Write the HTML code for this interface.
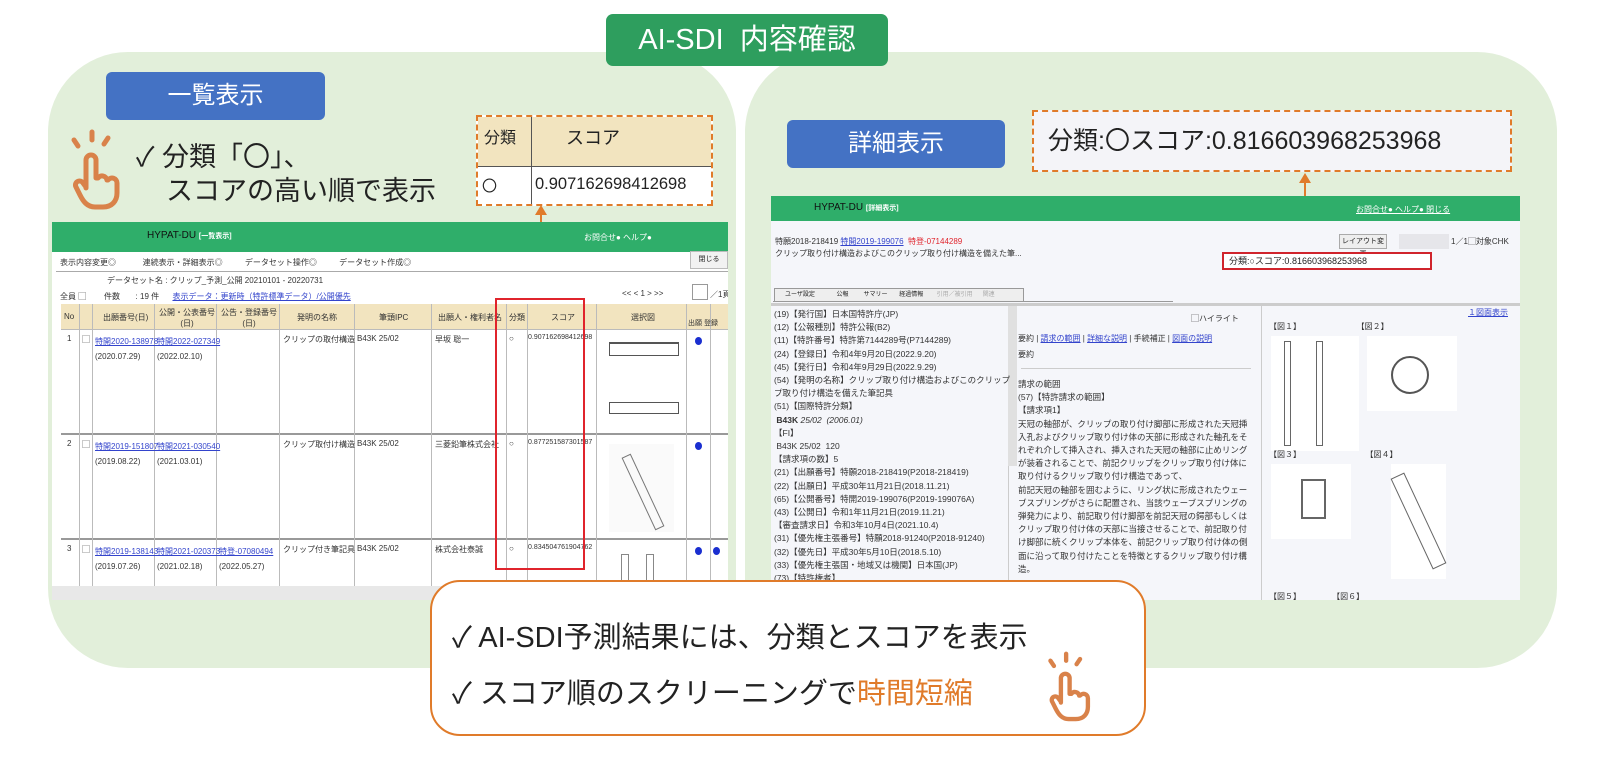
<!DOCTYPE html>
<html><head><meta charset="utf-8">
<style>
*{margin:0;padding:0;box-sizing:border-box}
body{width:1600px;height:774px;background:#fff;position:relative;overflow:hidden;font-family:"Liberation Sans","Noto Sans CJK JP",sans-serif;color:#222}
.a{position:absolute}
.panel{background:#e2efda;border-radius:80px}
.btn{background:#4472c4;color:#fff;border-radius:6px;font-size:24px;text-align:center}
.dash{border:2px dashed #e07b2a}
.s{font-size:8px;white-space:nowrap;color:#333}
.l{color:#3344cc;text-decoration:underline}
.gh{background:#2fae6a}
.vl{position:absolute;top:0;bottom:0;width:1px;background:#bbb}
.hl{position:absolute;left:0;right:0;height:1px;background:#bbb}
.t{font-size:8.5px;line-height:19.5px;white-space:nowrap;color:#333}
.dot{position:absolute;width:7px;height:8px;border-radius:50%;background:#1a2fd0;border-bottom:2px solid #1a2fd0}
</style></head><body>

<div class="a panel" style="left:48px;top:52px;width:688px;height:616px"></div>
<div class="a panel" style="left:745px;top:52px;width:812px;height:616px"></div>

<div class="a" style="left:606px;top:14px;width:282px;height:52px;background:#2e9e5e;border-radius:7px;color:#fff;font-size:29px;text-align:center;line-height:52px">AI-SDI&nbsp; 内容確認</div>

<!-- left header -->
<div class="a btn" style="left:106px;top:72px;width:219px;height:48px;line-height:48px">一覧表示</div>
<svg class="a" style="left:62px;top:128px" width="62" height="82" viewBox="0 0 62 82" fill="none" stroke="#d9824a" stroke-width="5" stroke-linecap="round" stroke-linejoin="round">
<path d="M30 4v8M12 12l4 6M46 10l-4 6"/>
<path d="M24 60V32a5 5 0 0 1 10 0v18h2a5 5 0 0 1 9 2h1a5 5 0 0 1 9 3v10c0 8-5 14-14 14h-8c-8 0-12-6-15-12l-4-8a4 4 0 0 1 7-4l3 4"/>
</svg>
<div class="a" style="left:136px;top:140px;font-size:27px;line-height:34px;white-space:nowrap">✓ 分類「〇」、<br>&nbsp;&nbsp;&nbsp;&nbsp;スコアの高い順で表示</div>

<div class="a dash" style="left:476px;top:115px;width:237px;height:91px;background:#fff">
 <div class="a" style="left:0;top:0;width:233px;height:50px;background:#f2e4bf;border-bottom:1px solid #555"></div>
 <div class="a" style="left:53px;top:0;width:1px;height:87px;background:#555"></div>
 <div class="a" style="left:6px;top:7px;font-size:16px">分類</div>
 <div class="a" style="left:88px;top:7px;font-size:18px">スコア</div>
 <div class="a" style="left:4px;top:58px;font-size:15px">〇</div>
 <div class="a" style="left:57px;top:58px;font-size:16.5px">0.907162698412698</div>
</div>
<div class="a" style="left:540px;top:210px;width:2px;height:88px;background:#e07b2a"></div>
<div class="a" style="left:535px;top:205px;width:0;height:0;border-left:6px solid transparent;border-right:6px solid transparent;border-bottom:10px solid #e07b2a"></div>

<!-- left screenshot -->
<div class="a" style="left:52px;top:222px;width:676px;height:378px;background:#fff;overflow:hidden">
 <div class="a gh" style="left:0;top:0;width:676px;height:30px"></div>
 <div class="a" style="left:95px;top:8px;font-size:10px;color:#111">HYPAT-DU <span style="font-size:7px;color:#fff;font-weight:bold">[一覧表示]</span></div>
 <div class="a s" style="left:532px;top:10px;color:#fff">お問合せ● ヘルプ●</div>
 <div class="a s" style="left:8px;top:35px">表示内容変更◎ &nbsp;&nbsp;&nbsp;&nbsp;&nbsp;&nbsp;&nbsp;&nbsp;&nbsp;&nbsp;&nbsp;連続表示・詳細表示◎ &nbsp;&nbsp;&nbsp;&nbsp;&nbsp;&nbsp;&nbsp;&nbsp;&nbsp;データセット操作◎ &nbsp;&nbsp;&nbsp;&nbsp;&nbsp;&nbsp;&nbsp;&nbsp;&nbsp;データセット作成◎</div>
 <div class="a" style="left:638px;top:29px;width:38px;height:18px;border:1px solid #bbb;background:#f2f2f2;font-size:7px;text-align:center;line-height:16px">閉じる</div>
 <div class="a" style="left:4px;top:49px;width:672px;height:1px;background:#aaa"></div>
 <div class="a s" style="left:55px;top:53px">データセット名 : クリップ_予測_公開 20210101 - 20220731</div>
 <div class="a s" style="left:8px;top:69px">全員 ▢ &nbsp;&nbsp;&nbsp;&nbsp;&nbsp;&nbsp;&nbsp;件数 &nbsp;&nbsp;&nbsp;&nbsp;&nbsp;&nbsp;: 19 件 &nbsp;&nbsp;&nbsp;&nbsp;&nbsp;<span class="l">表示データ：更新時（特許標準データ）/公開優先</span></div>
 <div class="a s" style="left:570px;top:67px">&lt;&lt; &lt; 1 &gt; &gt;&gt;</div>
 <div class="a" style="left:640px;top:62px;width:16px;height:16px;border:1px solid #999"></div>
 <div class="a s" style="left:658px;top:67px">／1頁</div>
 <div class="a" style="left:9px;top:82px;width:667px;height:296px">
  <div class="a" style="left:0;top:0;width:100%;height:25px;background:#f2e4bf"></div>
  <div class="hl" style="top:25px"></div><div class="hl" style="top:129px;background:#999;height:2px"></div><div class="hl" style="top:234px;background:#999;height:2px"></div>
  <div class="vl" style="left:18px"></div><div class="vl" style="left:31px"></div><div class="vl" style="left:93px"></div><div class="vl" style="left:155px"></div><div class="vl" style="left:218px"></div><div class="vl" style="left:293px"></div><div class="vl" style="left:370px"></div><div class="vl" style="left:445px"></div><div class="vl" style="left:466px"></div><div class="vl" style="left:535px"></div><div class="vl" style="left:625px"></div><div class="vl" style="left:649px"></div>
  <div class="a s" style="left:3px;top:8px">No</div><div class="a s" style="left:42px;top:8px">出願番号(日)</div><div class="a s" style="left:98px;top:3px;text-align:center">公開・公表番号<br>(日)</div><div class="a s" style="left:160px;top:3px;text-align:center">公告・登録番号<br>(日)</div><div class="a s" style="left:236px;top:8px">発明の名称</div><div class="a s" style="left:318px;top:8px">筆頭IPC</div><div class="a s" style="left:377px;top:8px">出願人・権利者名</div><div class="a s" style="left:448px;top:8px">分類</div><div class="a s" style="left:490px;top:8px">スコア</div><div class="a s" style="left:570px;top:8px">選択図</div><div class="a s" style="left:627px;top:14px;font-size:7px">出願 登録</div>
  <div class="a s" style="left:6px;top:30px">1</div><div class="a s" style="left:21px;top:30px">▢</div><div class="a s" style="left:34px;top:30px;line-height:15px"><span class="l">特開2020-138978</span><br>(2020.07.29)</div><div class="a s" style="left:96px;top:30px;line-height:15px"><span class="l">特開2022-027349</span><br>(2022.02.10)</div><div class="a s" style="left:222px;top:30px">クリップの取付構造</div><div class="a s" style="left:296px;top:30px">B43K 25/02</div><div class="a s" style="left:374px;top:30px">早坂 聡一</div><div class="a s" style="left:448px;top:30px">○</div><div class="a s" style="left:467px;top:30px;font-size:7px">0.907162698412698</div>
  <div class="a s" style="left:6px;top:135px">2</div><div class="a s" style="left:21px;top:135px">▢</div><div class="a s" style="left:34px;top:135px;line-height:15px"><span class="l">特開2019-151807</span><br>(2019.08.22)</div><div class="a s" style="left:96px;top:135px;line-height:15px"><span class="l">特開2021-030540</span><br>(2021.03.01)</div><div class="a s" style="left:222px;top:135px">クリップ取付け構造</div><div class="a s" style="left:296px;top:135px">B43K 25/02</div><div class="a s" style="left:374px;top:135px">三菱鉛筆株式会社</div><div class="a s" style="left:448px;top:135px">○</div><div class="a s" style="left:467px;top:135px;font-size:7px">0.877251587301587</div>
  <div class="a s" style="left:6px;top:240px">3</div><div class="a s" style="left:21px;top:240px">▢</div><div class="a s" style="left:34px;top:240px;line-height:15px"><span class="l">特開2019-138143</span><br>(2019.07.26)</div><div class="a s" style="left:96px;top:240px;line-height:15px"><span class="l">特開2021-020373</span><br>(2021.02.18)</div><div class="a s" style="left:158px;top:240px;line-height:15px"><span class="l">特登-07080494</span><br>(2022.05.27)</div><div class="a s" style="left:222px;top:240px">クリップ付き筆記具</div><div class="a s" style="left:296px;top:240px">B43K 25/02</div><div class="a s" style="left:374px;top:240px">株式会社泰誠</div><div class="a s" style="left:448px;top:240px">○</div><div class="a s" style="left:467px;top:240px;font-size:7px">0.834504761904762</div>
  <div class="dot" style="left:634px;top:33px"></div><div class="dot" style="left:634px;top:138px"></div><div class="dot" style="left:634px;top:243px"></div><div class="dot" style="left:652px;top:243px"></div>
  <div class="a" style="left:548px;top:38px;width:70px;height:14px;border:1px solid #555;border-top-width:2px"></div>
  <div class="a" style="left:548px;top:98px;width:70px;height:12px;border:1px solid #555"></div>
  <div class="a" style="left:548px;top:140px;width:65px;height:88px;background:#fafafa"></div>
  <div class="a" style="left:577px;top:148px;width:10px;height:80px;border:1px solid #777;transform:rotate(-25deg)"></div>
  <div class="a" style="left:560px;top:250px;width:8px;height:45px;border:1px solid #888"></div>
  <div class="a" style="left:585px;top:250px;width:8px;height:45px;border:1px solid #888"></div>
 </div>
 <div class="a" style="left:0;top:364px;width:676px;height:14px;background:#e8e8e8"></div>
 <div class="a" style="left:443px;top:76px;width:90px;height:272px;border:2px solid #e0242c"></div>
</div>

<!-- right header -->
<div class="a btn" style="left:787px;top:120px;width:218px;height:48px;line-height:48px">詳細表示</div>
<div class="a dash" style="left:1032px;top:110px;width:480px;height:62px;background:#f4f4f8;font-size:25px;line-height:58px;padding-left:14px;white-space:nowrap">分類:〇スコア:0.816603968253968</div>
<div class="a" style="left:1304px;top:178px;width:2px;height:72px;background:#e07b2a"></div>
<div class="a" style="left:1299px;top:173px;width:0;height:0;border-left:6px solid transparent;border-right:6px solid transparent;border-bottom:10px solid #e07b2a"></div>

<!-- right screenshot -->
<div class="a" style="left:771px;top:196px;width:749px;height:404px;background:#f5f6fa;overflow:hidden">
 <div class="a gh" style="left:0;top:0;width:749px;height:25px"></div>
 <div class="a" style="left:43px;top:6px;font-size:10px;color:#111">HYPAT-DU <span style="font-size:7px;color:#fff;font-weight:bold">[詳細表示]</span></div>
 <div class="a s" style="left:585px;top:8px;color:#fff;text-decoration:underline">お問合せ● ヘルプ● 閉じる</div>
 <div class="a s" style="left:4px;top:40px">特願2018-218419 <span class="l">特開2019-199076</span> &nbsp;<span style="color:#e0242c">特登-07144289</span></div>
 <div class="a s" style="left:4px;top:52px">クリップ取り付け構造およびこのクリップ取り付け構造を備えた筆...</div>
 <div class="a" style="left:568px;top:38px;width:48px;height:15px;border:1px solid #aaa;background:#eee;font-size:7px;text-align:center;line-height:13px">レイアウト変更</div>
 <div class="a" style="left:628px;top:38px;width:50px;height:15px;background:#e6e6ea"></div>
 <div class="a s" style="left:680px;top:40px">1／1▢対象CHK</div>
 <div class="a" style="left:451px;top:56px;width:210px;height:18px;border:2px solid #d0242c;background:#fff;font-size:9px;line-height:14px;padding-left:5px;white-space:nowrap">分類:○スコア:0.816603968253968</div>
 <div class="a" style="left:2px;top:105px;width:400px;height:1px;background:#999"></div>
 <div class="a" style="left:3px;top:92px;width:250px;height:14px;border:1px solid #999;background:#eee;font-size:6px;line-height:12px;padding-left:10px;white-space:nowrap">ユーザ設定 &nbsp;&nbsp;&nbsp;&nbsp;&nbsp;&nbsp;&nbsp;&nbsp;&nbsp;&nbsp;&nbsp;&nbsp;公報 &nbsp;&nbsp;&nbsp;&nbsp;&nbsp;&nbsp;&nbsp;&nbsp;サマリー &nbsp;&nbsp;&nbsp;&nbsp;&nbsp;&nbsp;経過情報 &nbsp;&nbsp;&nbsp;&nbsp;&nbsp;&nbsp;&nbsp;<span style="color:#aaa">引用／被引用 &nbsp;&nbsp;&nbsp;&nbsp;&nbsp;関連</span></div>
 <div class="a" style="left:0;top:107px;width:749px;height:3px;background:#ccc"></div>
 <div class="a" style="left:237px;top:110px;width:1px;height:300px;background:#ccc"></div>
 <div class="a" style="left:490px;top:110px;width:1px;height:300px;background:#ccc"></div>
 <div class="a" style="left:237px;top:110px;width:9px;height:160px;background:#e0e0e0"></div>
 <div class="a t" style="left:3px;top:112px;line-height:13.2px">(19)【発行国】日本国特許庁(JP)<br>(12)【公報種別】特許公報(B2)<br>(11)【特許番号】特許第7144289号(P7144289)<br>(24)【登録日】令和4年9月20日(2022.9.20)<br>(45)【発行日】令和4年9月29日(2022.9.29)<br>(54)【発明の名称】クリップ取り付け構造およびこのクリップ<br>プ取り付け構造を備えた筆記具<br>(51)【国際特許分類】<br>&nbsp;<b>B43K</b> <i>25/02 &nbsp;(2006.01)</i><br>【FI】<br>&nbsp;B43K 25/02 &nbsp;120<br>【請求項の数】5<br>(21)【出願番号】特願2018-218419(P2018-218419)<br>(22)【出願日】平成30年11月21日(2018.11.21)<br>(65)【公開番号】特開2019-199076(P2019-199076A)<br>(43)【公開日】令和1年11月21日(2019.11.21)<br>【審査請求日】令和3年10月4日(2021.10.4)<br>(31)【優先権主張番号】特願2018-91240(P2018-91240)<br>(32)【優先日】平成30年5月10日(2018.5.10)<br>(33)【優先権主張国・地域又は機関】日本国(JP)<br>(73)【特許権者】</div>
 <div class="a s" style="left:420px;top:117px">▢ハイライト</div>
 <div class="a s" style="left:247px;top:137px">要約 | <span class="l">請求の範囲</span> | <span class="l">詳細な説明</span> | 手続補正 | <span class="l">図面の説明</span></div>
 <div class="a s" style="left:247px;top:153px">要約</div>
 <div class="a" style="left:250px;top:172px;width:230px;height:1px;background:#ccc"></div>
 <div class="a t" style="left:247px;top:182px;line-height:13.2px">請求の範囲<br>(57)【特許請求の範囲】<br>【請求項1】<br>天冠の軸部が、クリップの取り付け脚部に形成された天冠挿<br>入孔およびクリップ取り付け体の天部に形成された軸孔をそ<br>れぞれ介して挿入され、挿入された天冠の軸部に止めリング<br>が装着されることで、前記クリップをクリップ取り付け体に<br>取り付けるクリップ取り付け構造であって、<br>前記天冠の軸部を囲むように、リング状に形成されたウェー<br>ブスプリングがさらに配置され、当該ウェーブスプリングの<br>弾発力により、前記取り付け脚部を前記天冠の鍔部もしくは<br>クリップ取り付け体の天部に当接させることで、前記取り付<br>け脚部に続くクリップ本体を、前記クリップ取り付け体の側<br>面に沿って取り付けたことを特徴とするクリップ取り付け構<br>造。</div>
 <div class="a s" style="left:697px;top:111px;color:#3344cc;text-decoration:underline">１図面表示</div>
 <div class="a s" style="left:498px;top:125px">【図１】 &nbsp;&nbsp;&nbsp;&nbsp;&nbsp;&nbsp;&nbsp;&nbsp;&nbsp;&nbsp;&nbsp;&nbsp;&nbsp;&nbsp;&nbsp;&nbsp;&nbsp;&nbsp;&nbsp;&nbsp;&nbsp;&nbsp;&nbsp;&nbsp;【図２】</div>
 <div class="a" style="left:500px;top:140px;width:88px;height:115px;background:#fff"></div>
 <div class="a" style="left:513px;top:145px;width:7px;height:105px;border:1px solid #666"></div>
 <div class="a" style="left:545px;top:145px;width:7px;height:105px;border:1px solid #666"></div>
 <div class="a" style="left:596px;top:140px;width:90px;height:75px;background:#fff"></div>
 <div class="a" style="left:620px;top:160px;width:38px;height:38px;border:2px solid #555;border-radius:50%"></div>
 <div class="a s" style="left:498px;top:253px">【図３】 &nbsp;&nbsp;&nbsp;&nbsp;&nbsp;&nbsp;&nbsp;&nbsp;&nbsp;&nbsp;&nbsp;&nbsp;&nbsp;&nbsp;&nbsp;&nbsp;&nbsp;&nbsp;&nbsp;&nbsp;&nbsp;&nbsp;&nbsp;&nbsp;&nbsp;&nbsp;&nbsp;&nbsp;【図４】</div>
 <div class="a" style="left:500px;top:268px;width:80px;height:75px;background:#fff"></div>
 <div class="a" style="left:530px;top:283px;width:25px;height:40px;border:2px solid #666"></div>
 <div class="a" style="left:620px;top:268px;width:55px;height:115px;background:#fff"></div>
 <div class="a" style="left:640px;top:275px;width:15px;height:100px;border:1px solid #666;transform:rotate(-25deg)"></div>
 <div class="a s" style="left:498px;top:395px">【図５】 &nbsp;&nbsp;&nbsp;&nbsp;&nbsp;&nbsp;&nbsp;&nbsp;&nbsp;&nbsp;&nbsp;&nbsp;&nbsp;【図６】</div>
</div>

<!-- bottom box -->
<div class="a" style="left:430px;top:580px;width:716px;height:156px;background:#fff;border:2px solid #e07b2a;border-radius:30px"></div>
<div class="a" style="left:452px;top:610px;font-size:29px;line-height:56px;white-space:nowrap;color:#222">✓ AI-SDI予測結果には、分類とスコアを表示<br>✓ スコア順のスクリーニングで<span style="color:#e07b2a">時間短縮</span></div>
<svg class="a" style="left:1040px;top:650px" width="54" height="72" viewBox="0 0 62 82" fill="none" stroke="#d9824a" stroke-width="5" stroke-linecap="round" stroke-linejoin="round">
<path d="M30 4v8M12 12l4 6M46 10l-4 6"/>
<path d="M24 60V32a5 5 0 0 1 10 0v18h2a5 5 0 0 1 9 2h1a5 5 0 0 1 9 3v10c0 8-5 14-14 14h-8c-8 0-12-6-15-12l-4-8a4 4 0 0 1 7-4l3 4"/>
</svg>
</body></html>
